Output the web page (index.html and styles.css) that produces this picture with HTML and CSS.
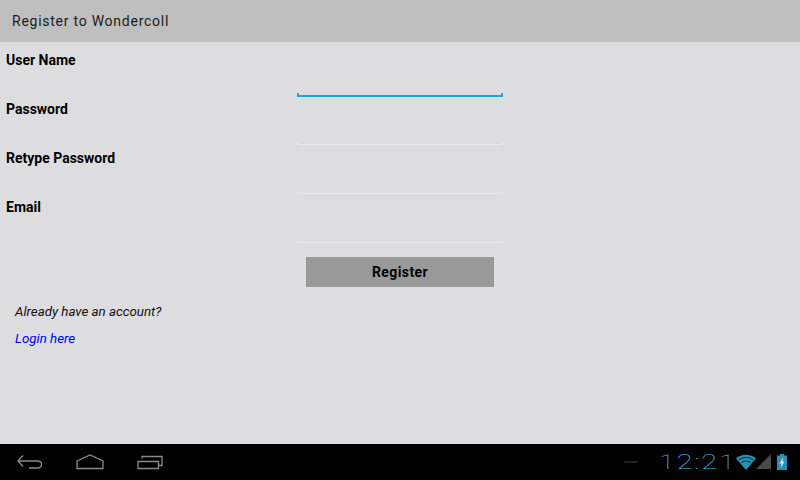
FILE: index.html
```html
<!DOCTYPE html>
<html lang="en">
<head>
  <meta charset="UTF-8">
  <meta name="viewport" content="width=device-width, initial-scale=1.0">
  <title>Register to Wondercoll</title>
  <link rel="stylesheet" href="styles.css">
</head>
<body>
  <header class="title-bar">Register to Wondercoll</header>

  <main class="content">
    <form class="register-form">
      <label class="form-label" for="username">User Name</label>
      <input class="form-input form-input-focus" id="username" type="text">
      <label class="form-label" for="password">Password</label>
      <input class="form-input" id="password" type="password">
      <label class="form-label" for="retype">Retype Password</label>
      <input class="form-input" id="retype" type="password">
      <label class="form-label" for="email">Email</label>
      <input class="form-input" id="email" type="email">
      <button class="register-btn" type="button">Register</button>
    </form>
    <p class="login-hint">Already have an account?</p>
    <a class="login-link" href="#">Login here</a>
  </main>

  <footer class="nav-bar">
    <div class="nav-buttons">
      <svg class="nav-icon" width="26" height="16" viewBox="0 0 26 16">
        <path d="M6 1.500 1 7l5 5.500M1 7h19.500c2.500 0 4 1.300 4 3.500s-1.500 3.500-4 3.500H12" />
      </svg>
      <svg class="nav-icon" width="28" height="16" viewBox="0 0 28 16">
        <path d="M1 7 14 1l13 6v7.500H1z" />
      </svg>
      <svg class="nav-icon" width="26" height="16" viewBox="0 0 26 16">
        <path d="M1 7.500h20.500v7H1zM5 4.500V2.500h20v9h-3.500" />
      </svg>
    </div>
    <div class="status-area">
      <span class="status-dash"></span>
      <span class="clock">12:21</span>
      <svg width="20" height="16" viewBox="0 0 20 16">
        <path d="M10 16 0 4.500C5.500-.5 14.500-.5 20 4.500z" fill="#2b8fb3" />
        <path d="M2.800 5.800c4-3.300 10.400-3.300 14.400 0M5.300 8.600c2.700-2.100 6.700-2.100 9.400 0" fill="none" stroke="#0a3a4c" stroke-width="1.200" />
      </svg>
      <svg width="16" height="16" viewBox="0 0 16 16">
        <path d="M0 15 15 0v15z" fill="#4a4a4a" />
      </svg>
      <svg class="battery" width="10" height="16" viewBox="0 0 10 16">
        <path d="M3 0h4v1.500h3V16H0V1.500h3z" fill="#2b8fb3" />
        <path d="M6 3 2.500 9.500h2L3.500 14 7.500 7.500h-2z" fill="#cfeaf4" />
      </svg>
    </div>
  </footer>
</body>
</html>
```

FILE: styles.css
```css
* {
  box-sizing: border-box;
}

body {
  margin: 0;
  height: 480px;
  display: flex;
  flex-direction: column;
  font-family: Roboto, "Liberation Sans", sans-serif;
  background: #dddddf;
  color: #000;
}

.title-bar {
  height: 42px;
  padding-left: 12px;
  display: flex;
  align-items: center;
  background: #bfbfbf;
  color: #1c1c1c;
  font-size: 14px;
  letter-spacing: 0.75px;
}

.content {
  flex: 1;
  padding-top: 5px;
}

.register-form {
  display: grid;
  grid-template-columns: 297px 206px 1fr;
  grid-auto-rows: 49px;
}

.form-label {
  grid-column: 1;
  padding: 5px 0 0 6px;
  font-size: 14px;
  font-weight: 700;
  line-height: 16px;
}

.form-input {
  grid-column: 2;
  align-self: end;
  width: 204px;
  height: 3px;
  margin: 0 1px;
  padding: 0;
  background: none;
  border: solid #e9e9ea;
  border-width: 0 1px 1px;
  border-radius: 0;
  outline: none;
}

.form-input-focus {
  width: 206px;
  height: 4px;
  margin: 0 0 -1px;
  border-color: #20a7d6;
  border-width: 0 2px 2px;
}

.register-btn {
  grid-column: 1 / -1;
  justify-self: center;
  width: 188px;
  height: 30px;
  margin-top: 14px;
  padding: 0;
  border: none;
  background: #999;
  color: #000;
  font-family: inherit;
  font-size: 14px;
  font-weight: 700;
  letter-spacing: 0.4px;
}

.login-hint {
  margin: 12px 0 0 15px;
  font-size: 13.300px;
  font-style: italic;
  line-height: 16px;
  color: #111;
}

.login-link {
  display: block;
  margin: 11px 0 0 15px;
  font-size: 13.300px;
  font-style: italic;
  line-height: 16px;
  color: #00f;
  text-decoration: none;
}

.nav-bar {
  height: 36px;
  display: flex;
  align-items: center;
  justify-content: space-between;
  padding: 0 13px 0 17px;
  background: #000;
}

.nav-buttons {
  display: flex;
  align-items: center;
  gap: 33px;
}

.nav-icon {
  fill: none;
  stroke: #8a8a8a;
  stroke-width: 1.300;
}

.status-area {
  display: flex;
  align-items: center;
}

.status-dash {
  width: 14px;
  height: 2px;
  margin-right: 21px;
  background: #222;
}

.clock {
  width: 77px;
  font-size: 21px;
  font-weight: 100;
  letter-spacing: 1.500px;
  color: #4fc0ea;
  transform: scaleX(1.36);
  transform-origin: left center;
}

.battery {
  margin-left: 5px;
}
```
